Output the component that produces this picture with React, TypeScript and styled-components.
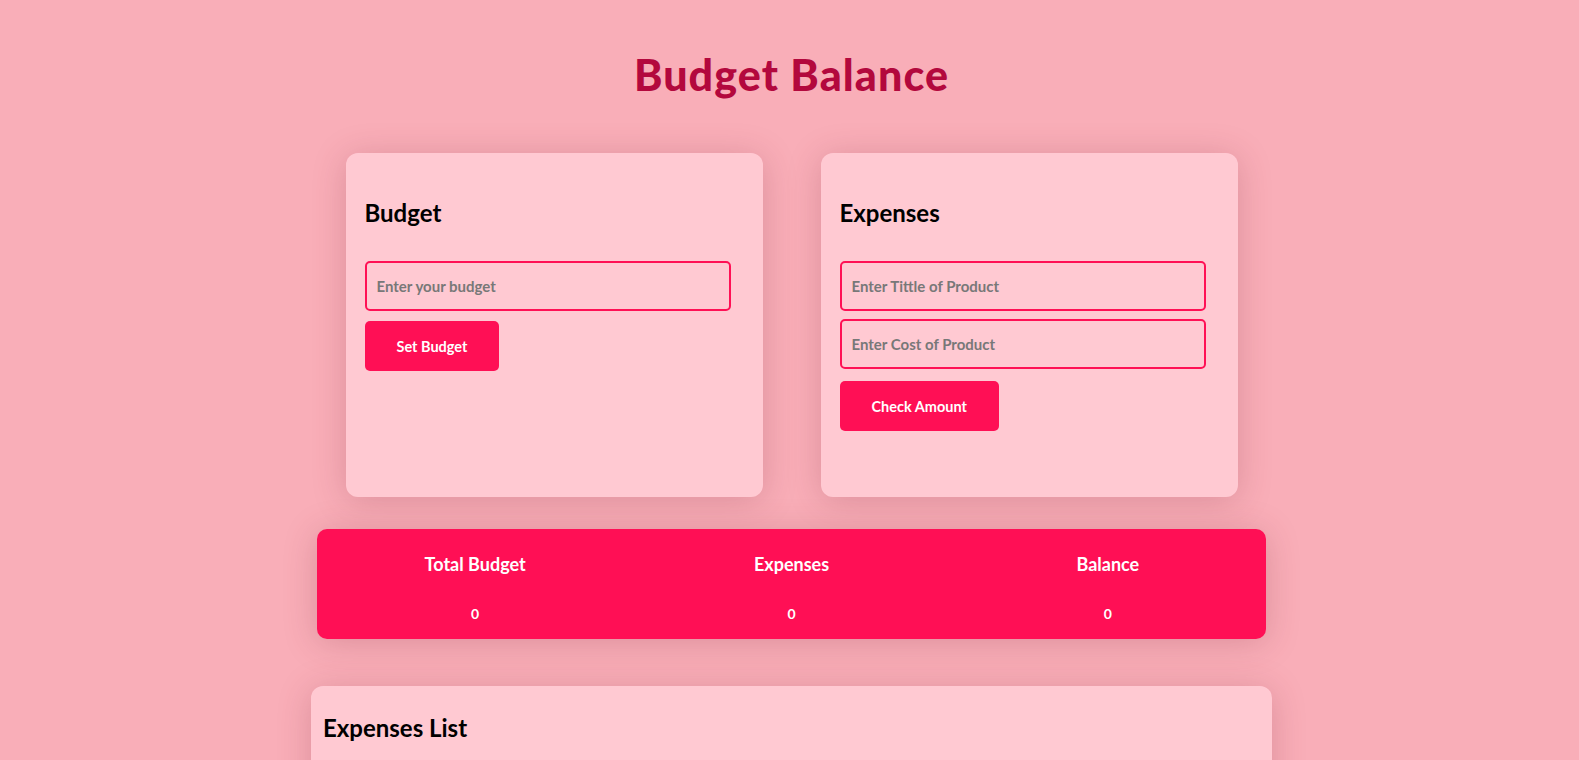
import React from "react";
import styled, { createGlobalStyle } from "styled-components";

const GlobalStyle = createGlobalStyle`
  html, body {
    margin: 0;
    padding: 0;
    background: #f9aeb8;
  }
  body {
    font-family: Lato, "Open Sans", "Liberation Sans", sans-serif;
    color: #000;
  }
  * { box-sizing: border-box; }
`;

const Page = styled.main`
  display: flex;
  flex-direction: column;
  align-items: center;
  padding: 50px 0 40px 4px;
  min-height: 760px;
`;

const Title = styled.h1`
  margin: 0;
  font-size: 43px;
  line-height: 50px;
  font-weight: 900;
  color: #b3083d;
  letter-spacing: 1.1px;
`;

const CardsRow = styled.section`
  display: flex;
  justify-content: center;
  gap: 58px;
  margin-top: 53px;
`;

const Card = styled.div`
  width: 417px;
  height: 344px;
  background: #ffc9d2;
  border-radius: 12px;
  padding: 20px 20px 20px 19px;
  box-shadow: 0 4px 34px rgba(120, 30, 50, 0.22);
  display: flex;
  flex-direction: column;
  align-items: flex-start;
`;

const CardTitle = styled.h2`
  margin: 25px 0 33px;
  font-size: 24px;
  line-height: 30px;
  font-weight: 700;
  color: #000;
`;

const Input = styled.input`
  width: 366px;
  height: 50px;
  border: 2px solid #ff1055;
  border-radius: 5px;
  background: transparent;
  padding: 0 10px;
  font-family: inherit;
  font-size: 15px;
  font-weight: 700;
  color: #333;
  outline: none;
  &::placeholder {
    color: #787878;
  }
`;

const InputStack = styled.div`
  display: flex;
  flex-direction: column;
  gap: 8px;
`;

const Button = styled.button<{ $gapBefore: number }>`
  margin-top: ${(p) => p.$gapBefore}px;
  height: 50px;
  padding: 0 32px;
  border: none;
  border-radius: 5px;
  background: #ff0f55;
  color: #fff;
  font-family: inherit;
  font-size: 14.5px;
  font-weight: 700;
  cursor: pointer;
`;

const SummaryBar = styled.section`
  width: 949px;
  height: 110px;
  margin-top: 32px;
  background: #ff0f55;
  border-radius: 10px;
  box-shadow: 0 4px 34px rgba(120, 30, 50, 0.22);
  display: grid;
  grid-template-columns: repeat(3, 1fr);
  padding-top: 24px;
`;

const Stat = styled.div`
  display: flex;
  flex-direction: column;
  align-items: center;
  color: #fff;
`;

const StatLabel = styled.div`
  font-size: 18px;
  line-height: 22px;
  font-weight: 700;
`;

const StatValue = styled.div`
  margin-top: 30px;
  font-size: 14px;
  line-height: 18px;
  font-weight: 700;
`;

const ListCard = styled.section`
  width: 961px;
  min-height: 160px;
  margin-top: 47px;
  background: #ffc9d2;
  border-radius: 12px;
  padding: 12px;
  box-shadow: 0 4px 34px rgba(120, 30, 50, 0.22);
`;

const ListTitle = styled.h2`
  margin: 15px 0 0;
  font-size: 24px;
  line-height: 30px;
  font-weight: 700;
  color: #000;
`;

export default function App() {
  return (
    <>
      <GlobalStyle />
      <Page>
        <Title>Budget Balance</Title>
        <CardsRow>
          <Card>
            <CardTitle>Budget</CardTitle>
            <InputStack>
              <Input type="number" placeholder="Enter your budget" />
            </InputStack>
            <Button $gapBefore={10}>Set Budget</Button>
          </Card>
          <Card>
            <CardTitle>Expenses</CardTitle>
            <InputStack>
              <Input type="text" placeholder="Enter Tittle of Product" />
              <Input type="number" placeholder="Enter Cost of Product" />
            </InputStack>
            <Button $gapBefore={12}>Check Amount</Button>
          </Card>
        </CardsRow>
        <SummaryBar>
          <Stat>
            <StatLabel>Total Budget</StatLabel>
            <StatValue>0</StatValue>
          </Stat>
          <Stat>
            <StatLabel>Expenses</StatLabel>
            <StatValue>0</StatValue>
          </Stat>
          <Stat>
            <StatLabel>Balance</StatLabel>
            <StatValue>0</StatValue>
          </Stat>
        </SummaryBar>
        <ListCard>
          <ListTitle>Expenses List</ListTitle>
        </ListCard>
      </Page>
    </>
  );
}
